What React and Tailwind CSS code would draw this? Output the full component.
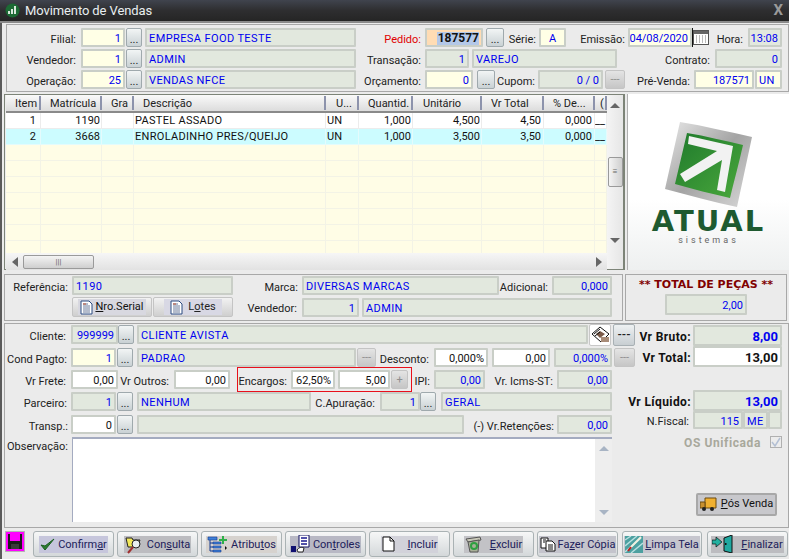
import React from "react";

const fieldBg = {
  gray: "bg-[#e2e8de] text-[#0000f0]",
  yellow: "bg-[#ffffe6] text-[#0000f0]",
  white: "bg-white text-[#111]",
  orange: "bg-[#ffdcb4] text-[#111]",
};

function Lbl({ className = "", children }) {
  return (
    <div className={"shrink-0 text-right whitespace-nowrap text-[#222] leading-[13px] pt-[3px] " + className}>{children}</div>
  );
}

function Box({ className = "", v = "gray", left, children }) {
  return (
    <div
      className={
        "shrink-0 h-[19px] border-2 border-[#c9cec7] rounded-[1px] flex items-center px-[2px] pt-[2px] leading-[13px] whitespace-nowrap overflow-hidden " +
        (left ? "justify-start tracking-[0.4px] " : "justify-end ") +
        fieldBg[v] +
        " " +
        className
      }
    >
      {children}
    </div>
  );
}

function Dots({ className = "" }) {
  return (
    <div
      className={
        "shrink-0 h-[19px] border border-[#9fa9ad] rounded-[2px] bg-gradient-to-b from-[#f2f5f5] to-[#c9d1d4] flex items-center justify-center text-[#222] leading-none pt-[3px] " +
        className
      }
    >
      ...
    </div>
  );
}

function Off({ className = "", plus }) {
  return (
    <div
      className={
        "shrink-0 h-[19px] border border-[#c4c4c4] rounded-[2px] bg-gradient-to-b from-[#e4e4e4] to-[#c6c6c6] flex items-center justify-center text-[#8f8f8f] text-[11px] leading-none " +
        className
      }
    >
      {plus ? "+" : "---"}
    </div>
  );
}

function U({ children }) {
  return <span className="underline">{children}</span>;
}

function Page() {
  return (
    <svg width="13" height="15" viewBox="0 0 13 15" className="shrink-0">
      <path d="M1 1h8l3 3v10H1z" fill="#fff" stroke="#2a4a80" />
      <path d="M3 4h5M3 6h7M3 8h7M3 10h7M3 12h7" stroke="#6a7a9a" />
      <path d="M3 4h3" stroke="#c05030" />
    </svg>
  );
}

const tools = [
  {
    w: "w-[81px]",
    bg: "bg-[#c6c6dc]",
    gap: "gap-[3px]",
    text: <>Confirm<U>a</U>r</>,
    icon: (
      <svg width="15" height="15" viewBox="0 0 15 15">
        <path d="M1 8l4 5L14 2 5 9z" fill="#2e7d32" stroke="#1b5e20" />
      </svg>
    ),
  },
  {
    w: "w-[81px] ml-[3px]",
    bg: "bg-[#bcbcc0]",
    gap: "gap-[3px]",
    text: <>Con<U>s</U>ulta</>,
    icon: (
      <svg width="19" height="19" viewBox="0 0 19 19">
        <path d="M1 3h6l1 2h7l-3 7H3z" fill="#f2e85a" stroke="#222" />
        <circle cx="11" cy="9" r="4" fill="#e8eef0" stroke="#222" />
        <path d="M8 12l-5 6" stroke="#a03030" strokeWidth="2" />
      </svg>
    ),
  },
  {
    w: "w-[81px] ml-[3px]",
    bg: "bg-[#d6d2ce]",
    gap: "gap-[3px]",
    text: <>Atribu<U>t</U>os</>,
    icon: (
      <svg width="21" height="17" viewBox="0 0 21 17">
        <path d="M3 3v12M3 7h3M3 11h3M3 15h3" stroke="#123a90" fill="none" />
        <path d="M1 1h9v3H1zM6 6h8v2H6zM6 10h8v2H6zM6 14h8v2H6z" fill="#3f80d8" stroke="#123a90" strokeWidth="0.6" />
        <path d="M12 3h3V0h2v3h3v2h-3v3h-2V5h-3z" fill="#2fb04a" />
        <path d="M18 10l2 2-2 2z" fill="#111" />
      </svg>
    ),
  },
  {
    w: "w-[81px] ml-[3px]",
    bg: "bg-[#b8b8c4]",
    gap: "gap-[3px]",
    text: <>Con<U>t</U>roles</>,
    icon: (
      <svg width="19" height="18" viewBox="0 0 19 18">
        <path d="M8 0h10v12H8z" fill="#fff" stroke="#101060" />
        <path d="M10 3h6M10 6h6M10 9h6" stroke="#1a1a90" strokeWidth="1.4" />
        <rect x="0" y="11" width="5" height="6" fill="#101070" />
        <path d="M6 15c2-3 5-3 7-2l-1 4H7z" fill="#fff" stroke="#222" />
      </svg>
    ),
  },
  {
    w: "w-[81px] ml-[3px]",
    bg: "bg-[#d2d2da]",
    gap: "gap-[13px]",
    text: <><U>I</U>ncluir</>,
    icon: (
      <svg width="13" height="16" viewBox="0 0 13 16">
        <path d="M1 1h7l4 4v10H1z" fill="#fff" stroke="#111" />
        <path d="M8 1v4h4" fill="none" stroke="#111" />
      </svg>
    ),
  },
  {
    w: "w-[81px] ml-[3px]",
    bg: "bg-[#c2c2c6]",
    gap: "gap-[8px]",
    text: <><U>E</U>xcluir</>,
    icon: (
      <svg width="17" height="17" viewBox="0 0 17 17">
        <path d="M1 3l14-2 1 3-13 2z" fill="#c8c8b8" stroke="#555" />
        <path d="M3 6l11-2-1 12H5z" fill="#a8b098" stroke="#555" />
        <circle cx="9" cy="10" r="3" fill="none" stroke="#2ea040" strokeWidth="2" />
      </svg>
    ),
  },
  {
    w: "w-[81px] ml-[3px]",
    bg: "bg-[#c4c4cc]",
    gap: "gap-[2px]",
    text: <>Fa<U>z</U>er Cópia</>,
    icon: (
      <svg width="16" height="15" viewBox="0 0 16 15">
        <path d="M1 1h7v10H1z" fill="#fff" stroke="#111" />
        <path d="M6 4h6l3 3v7H6z" fill="#fff" stroke="#111" />
        <path d="M8 8h5M8 10h5M8 12h5M3 3h3M3 5h2" stroke="#111" />
      </svg>
    ),
  },
  {
    w: "w-[80px] ml-[4px]",
    bg: "bg-[#c6c6ce]",
    gap: "gap-[2px]",
    text: <><U>L</U>impa Tela</>,
    icon: (
      <svg width="18" height="17" viewBox="0 0 18 17">
        <rect width="18" height="17" fill="#4ca0a0" />
        <path d="M0 4l6-4M0 10L12 0M0 16L16 2M6 17L18 7" stroke="#b8e0e0" strokeWidth="1.4" />
        <path d="M16 1L5 12" stroke="#f0f0e0" strokeWidth="2" />
        <path d="M6 11l-3 4" stroke="#c02020" strokeWidth="2" />
      </svg>
    ),
  },
  {
    w: "w-[81px] ml-[5px]",
    bg: "bg-[#bcbcc0]",
    gap: "gap-[8px]",
    text: <><U>F</U>inalizar</>,
    icon: (
      <svg width="21" height="18" viewBox="0 0 21 18">
        <path d="M0 5h4V2l6 5-6 5V9H0z" fill="#23b0a0" stroke="#111" strokeWidth="0.7" />
        <path d="M12 3l8-3v18l-8-2z" fill="#1fa8a0" stroke="#111" />
        <rect x="13" y="8" width="1.5" height="2" fill="#111" />
      </svg>
    ),
  },
];

const cols = [
  { w: "w-[35px]", name: "Item", r: "pr-[4px] text-right", h: "pl-[9px]" },
  { w: "w-[61px]", name: "Matrícula", r: "text-right pr-[1px]", h: "pl-[9px]" },
  { w: "w-[32px]", name: "Gra", r: "", h: "pl-[9px]" },
  { w: "w-[192px]", name: "Descrição", r: "pl-[1px] tracking-[0.3px]", h: "pl-[9px]" },
  { w: "w-[33px]", name: "U...", r: "pl-[1px]", h: "pl-[10px]" },
  { w: "w-[54px]", name: "Quantid.", r: "text-right pr-[1px]", h: "pl-[9px]" },
  { w: "w-[69px]", name: "Unitário", r: "text-right pr-[1px]", h: "pl-[10px]" },
  { w: "w-[62px]", name: "Vr Total", r: "text-right pr-[2px]", h: "pl-[9px]" },
  { w: "w-[51px]", name: "% De...", r: "text-right pr-[2px]", h: "pl-[9px]" },
  { w: "w-[12px]", name: "(", r: "", h: "pl-[5px]" },
];

const rows = [
  { bg: "bg-white", line: "border-[#ececec]", cells: ["1", "1190", "", "PASTEL ASSADO", "UN", "1,000", "4,500", "4,50", "0,000", "__"] },
  { bg: "bg-[#ccfcff]", line: "border-[#e4fbfc]", cells: ["2", "3668", "", "ENROLADINHO PRES/QUEIJO", "UN", "1,000", "3,500", "3,50", "0,000", "__"] },
];

const blanks = [0, 1, 2, 3, 4, 5, 6];

function Table() {
  return (
    <div className="w-[621px] h-[176px] shrink-0 border border-[#7d8478] border-r-2 flex bg-[#ececec]">
      <div className="w-[601px] ml-[1px] flex flex-col shrink-0">
        <div className="flex h-[18px] shrink-0 bg-gradient-to-b from-[#fafafa] to-[#dcdcdc] border-b-2 border-[#8a8a8a]">
          {cols.map((c) => (
            <div key={c.name} className={"shrink-0 flex items-center overflow-hidden whitespace-nowrap border-r-2 border-[#8d93ac] my-[1px] pt-[2px] leading-[12px] text-[#222] " + c.w + " " + c.h}>
              {c.name}
            </div>
          ))}
        </div>
        {rows.map((r) => (
          <div key={r.cells[0]} className={"flex h-[16px] shrink-0 text-[#111] " + r.bg}>
            {cols.map((c, i) => (
              <div key={c.name} className={"shrink-0 overflow-hidden whitespace-nowrap leading-[16px] border-r border-b " + r.line + " " + c.w + " " + c.r}>
                {r.cells[i]}
              </div>
            ))}
          </div>
        ))}
        <div className="h-[108px] shrink-0 overflow-hidden">
          {blanks.map((b) => (
            <div key={b} className="flex h-[16px] bg-[#fffde6]">
              {cols.map((c) => (
                <div key={c.name} className={"shrink-0 border-r border-b border-[#f3f3e6] " + c.w}></div>
              ))}
            </div>
          ))}
        </div>
        <div className="h-[17px] shrink-0 flex items-center bg-gradient-to-b from-[#f6f6f6] to-[#e2e2e2]">
          <div className="ml-[6px] border-y-[5px] border-r-[6px] border-y-transparent border-r-[#666]"></div>
          <div className="ml-[5px] w-[71px] h-[14px] border border-[#9a9a9a] rounded-[2px] bg-gradient-to-b from-[#f4f4f4] to-[#cfcfcf] flex items-center justify-center text-[8px] leading-none text-[#666]">
            |||
          </div>
          <div className="ml-auto mr-[5px] border-y-[5px] border-l-[6px] border-y-transparent border-l-[#666]"></div>
        </div>
      </div>
      <div className="flex-1 flex flex-col items-center bg-gradient-to-r from-[#f4f4f4] to-[#e6e6e6]">
        <div className="mt-[8px] border-x-[5px] border-b-[5px] border-x-transparent border-b-[#666]"></div>
        <div className="mt-[49px] w-[15px] h-[30px] border border-[#9a9a9a] rounded-[2px] bg-gradient-to-r from-[#f4f4f4] to-[#cfcfcf] flex items-center justify-center text-[8px] leading-none text-[#666]">
          ≡
        </div>
        <div className="mt-[51px] border-x-[5px] border-t-[5px] border-x-transparent border-t-[#666]"></div>
      </div>
    </div>
  );
}

function Logo() {
  return (
    <div className="w-[162px] h-[176px] shrink-0 ml-[2px] bg-gradient-to-b from-white from-60% to-[#eef0f0] flex flex-col items-center border-l border-[#b0b0b0]">
      <svg width="88" height="86" viewBox="0 0 88 86" className="mt-[28px] shrink-0">
        <defs>
          <linearGradient id="silver" x1="0" y1="0" x2="1" y2="1">
            <stop offset="0" stopColor="#e8e8e8" />
            <stop offset="0.5" stopColor="#a4a4a4" />
            <stop offset="1" stopColor="#d8d8d8" />
          </linearGradient>
          <linearGradient id="leaf" x1="0" y1="0" x2="1" y2="1">
            <stop offset="0" stopColor="#1f7a2c" />
            <stop offset="1" stopColor="#4aa83c" />
          </linearGradient>
        </defs>
        <path d="M15 0C40 4 64 10 87 15C82 38 77 62 72 85C48 80 24 73 0 67C5 45 10 22 15 0Z" fill="url(#silver)" />
        <path d="M22 11C41 14 60 19 78 23C74 41 69 59 65 76C47 72 28 67 10 62C14 45 18 28 22 11Z" fill="url(#leaf)" />
        <path d="M24 14L68 24L60 70L52 68L57 38L20 60L15 52L52 29L23 22Z" fill="#f2f2f2" />
      </svg>
      <div className="font-['DejaVu_Sans',sans-serif] font-bold text-[29px] leading-[29px] tracking-[2px] text-[#1e5a30] mt-[-1px]">
        ATUAL
      </div>
      <div className="text-[9px] leading-[8px] tracking-[3px] text-[#666]">sistemas</div>
    </div>
  );
}

export default function App() {
  return (
    <div className="w-[789px] h-[559px] overflow-hidden flex flex-col bg-[#ebebeb] font-['Roboto',sans-serif] text-[11px]">
      <div className="h-[23px] shrink-0 bg-gradient-to-b from-[#40444e] via-[#2e2e30] to-[#252525] border-b-2 border-[#8a8a8a] flex items-center pl-[5px]">
        <svg width="15" height="15" viewBox="0 0 15 15">
          <circle cx="7.5" cy="7.5" r="7" fill="#1c6a34" />
          <path d="M3 11V8h2v3zM6 11V6h2v5zM9 11V3h2v8z" fill="#d9e8dc" />
        </svg>
        <span className="ml-[5px] text-[#e8eef0] text-[13px] tracking-[-0.1px]">Movimento de Vendas</span>
        <span className="ml-auto mr-[6px] text-[#9a9a9a] font-bold text-[15px] leading-none">X</span>
      </div>

      <div className="flex-1 flex flex-col border-l-2 border-[#5a5a5a] min-h-0">
        {/* cabecalho */}
        <div className="ml-[4px] mt-[1px] h-[68px] shrink-0 border border-[#a8a8a8] flex flex-col gap-[2px] pt-[3px]">
          <div className="flex items-center">
            <Lbl className="w-[69px]">Filial:</Lbl>
            <Box v="yellow" className="w-[44px] ml-[5px]">1</Box>
            <Dots className="w-[16px] ml-[1px]" />
            <Box left className="w-[211px] ml-[3px]">EMPRESA FOOD TESTE</Box>
            <Lbl className="w-[65px] !text-[#e00000]">Pedido:</Lbl>
            <Box v="orange" className="w-[58px] ml-[4px] font-bold text-[12px]">
              <span className="bg-[#b4c8e8] text-[#111] pl-[1px]">187577</span>
            </Box>
            <Dots className="w-[18px] ml-[3px]" />
            <Lbl className="w-[32px]">Série:</Lbl>
            <Box v="yellow" className="w-[27px] ml-[3px] !justify-center">A</Box>
            <Lbl className="w-[59px]">Emissão:</Lbl>
            <Box v="yellow" className="w-[64px] ml-[3px]">04/08/2020</Box>
            <div className="w-[17px] h-[19px] shrink-0 border-l border-[#111] flex items-center justify-center">
              <svg width="16" height="15" viewBox="0 0 16 15">
                <rect x="0.5" y="0.5" width="15" height="14" fill="#fff" stroke="#555" />
                <rect x="1" y="1" width="14" height="3" fill="#666" />
                <path d="M3 6h1M6 6h1M9 6h1M12 6h1M3 8h1M6 8h1M9 8h1M12 8h1M3 10h1M6 10h1M9 10h1M12 10h1M3 12h1M6 12h1M9 12h1M12 12h1" stroke="#777" />
              </svg>
            </div>
            <Lbl className="w-[34px]">Hora:</Lbl>
            <Box className="w-[34px] ml-[5px]">13:08</Box>
          </div>
          <div className="flex items-center">
            <Lbl className="w-[69px]">Vendedor:</Lbl>
            <Box v="yellow" className="w-[44px] ml-[5px]">1</Box>
            <Dots className="w-[16px] ml-[1px]" />
            <Box left className="w-[211px] ml-[3px]">ADMIN</Box>
            <Lbl className="w-[65px]">Transação:</Lbl>
            <Box className="w-[44px] ml-[4px]">1</Box>
            <Box left className="w-[145px] ml-[3px]">VAREJO</Box>
            <Lbl className="w-[93px]">Contrato:</Lbl>
            <Box className="w-[67px] ml-[5px]">0</Box>
          </div>
          <div className="flex items-center">
            <Lbl className="w-[69px]">Operação:</Lbl>
            <Box v="yellow" className="w-[44px] ml-[5px]">25</Box>
            <Dots className="w-[16px] ml-[1px]" />
            <Box left className="w-[211px] ml-[3px]">VENDAS NFCE</Box>
            <Lbl className="w-[65px]">Orçamento:</Lbl>
            <Box v="yellow" className="w-[48px] ml-[4px]">0</Box>
            <Dots className="w-[18px] ml-[4px]" />
            <Lbl className="w-[40px]">Cupom:</Lbl>
            <Box className="w-[65px] ml-[3px]">0 / 0</Box>
            <Off className="w-[20px] ml-[2px]" />
            <Lbl className="w-[65px]">Pré-Venda:</Lbl>
            <Box v="yellow" className="w-[60px] ml-[4px]">187571</Box>
            <Box v="yellow" left className="w-[27px] ml-[1px]">UN</Box>
          </div>
        </div>

        {/* itens */}
        <div className="flex ml-[2px] mt-[2px] shrink-0">
          <Table />
          <Logo />
        </div>

        {/* referencia + total */}
        <div className="flex ml-[2px] mt-[4px] shrink-0">
          <div className="w-[619px] h-[47px] shrink-0 border border-[#a8a8a8] flex flex-col gap-[2px] pt-[1px]">
            <div className="flex items-center">
              <Lbl className="w-[63px]">Referência:</Lbl>
              <Box left className="w-[161px] ml-[4px]">1190</Box>
              <Lbl className="w-[65px]">Marca:</Lbl>
              <Box left className="w-[197px] ml-[4px]">DIVERSAS MARCAS</Box>
              <Lbl className="w-[49px]">Adicional:</Lbl>
              <Box className="w-[60px] ml-[4px]">0,000</Box>
            </div>
            <div className="flex items-center">
              <div className="w-[80px] h-[20px] ml-[67px] shrink-0 border border-[#c4c4c4] rounded-[2px] bg-gradient-to-b from-[#f2f2f2] to-[#cfcfcf] flex items-center justify-center">
                <div className="flex items-center gap-[2px] bg-[#d8d8e0] px-[2px] h-[16px] text-[#111]">
                  <Page />
                  <span><U>N</U>ro.Serial</span>
                </div>
              </div>
              <div className="w-[80px] h-[20px] ml-[1px] shrink-0 border border-[#c4c4c4] rounded-[2px] bg-gradient-to-b from-[#f2f2f2] to-[#cfcfcf] flex items-center justify-center">
                <div className="flex items-center gap-[5px] bg-[#d8d8e4] px-[6px] h-[16px] text-[#222]">
                  <Page />
                  <span>L<U>o</U>tes</span>
                </div>
              </div>
              <Lbl className="w-[64px]">Vendedor:</Lbl>
              <Box className="w-[57px] ml-[5px]">1</Box>
              <Box left className="w-[250px] ml-[3px]">ADMIN</Box>
            </div>
          </div>
          <div className="w-[162px] h-[47px] ml-[2px] shrink-0 border border-[#a8a8a8] flex flex-col items-center">
            <div className="h-[17px] mt-[2px] font-bold text-[#800000] text-[11px] font-['DejaVu_Sans',sans-serif] whitespace-nowrap">
              ** TOTAL DE PEÇAS **
            </div>
            <Box className="w-[82px] !h-[21px]">2,00</Box>
          </div>
        </div>

        {/* totais e pagamento */}
        <div className="ml-[2px] mt-[2px] w-[785px] h-[205px] shrink-0 border border-[#a8a8a8] flex">
          <div className="w-[631px] shrink-0 flex flex-col pt-[1px]">
            <div className="flex items-center h-[19px]">
              <Lbl className="w-[61px]">Cliente:</Lbl>
              <Box className="w-[47px] ml-[5px]">999999</Box>
              <Dots className="w-[16px]" />
              <Box left className="w-[451px] ml-[3px]">CLIENTE AVISTA</Box>
              <div className="w-[22px] h-[22px] ml-[1px] shrink-0 rounded-[2px] border border-[#c8c8c8] bg-white flex items-center justify-center">
                <svg width="19" height="17" viewBox="0 0 19 17">
                  <path d="M1 8l8-7 9 7-8 8z" fill="#fff" stroke="#111" />
                  <path d="M5 8l4-3 5 3-5 4z" fill="#7a5a48" />
                  <path d="M10 11h8v5h-8z" fill="#a88c78" />
                  <path d="M3 8l6-5M4 10l5-4" stroke="#111" />
                </svg>
              </div>
              <div className="w-[22px] h-[22px] ml-[2px] shrink-0 rounded-[2px] border border-[#a8b0b4] bg-gradient-to-b from-[#eef1f2] to-[#c8ced2] flex items-center justify-center font-bold text-[#222] leading-none">
                ---
              </div>
            </div>
            <div className="flex items-center mt-[4px]">
              <Lbl className="w-[62px]">Cond Pagto:</Lbl>
              <Box v="yellow" className="w-[45px] ml-[4px]">1</Box>
              <Dots className="w-[16px] ml-[1px]" />
              <Box left className="w-[219px] ml-[4px]">PADRAO</Box>
              <Off className="w-[19px] ml-[1px]" />
              <Lbl className="w-[53px]">Desconto:</Lbl>
              <Box v="white" className="w-[54px] ml-[5px]">0,000%</Box>
              <Box v="white" className="w-[58px] ml-[4px]">0,00</Box>
              <Box className="w-[58px] ml-[4px]">0,000%</Box>
              <Off className="w-[21px] ml-[2px]" />
            </div>
            <div className="flex items-center h-[19px] mt-[3px]">
              <Lbl className="w-[61px]">Vr Frete:</Lbl>
              <Box v="white" className="w-[47px] ml-[5px]">0,00</Box>
              <Lbl className="w-[51px]">Vr Outros:</Lbl>
              <Box v="white" className="w-[56px] ml-[5px]">0,00</Box>
              <div className="w-[175px] h-[25px] ml-[7px] shrink-0 border border-[#e8101c] flex items-center">
                <Lbl className="w-[49px]">Encargos:</Lbl>
                <Box v="white" className="w-[44px] ml-[4px]">62,50%</Box>
                <Box v="white" className="w-[52px] ml-[3px]">5,00</Box>
                <Off plus className="w-[17px] ml-[1px]" />
              </div>
              <Lbl className="w-[18px]">IPI:</Lbl>
              <Box className="w-[51px] ml-[4px]">0,00</Box>
              <Lbl className="w-[68px]">Vr. Icms-ST:</Lbl>
              <Box className="w-[55px] ml-[4px]">0,00</Box>
            </div>
            <div className="flex items-center mt-[3px]">
              <Lbl className="w-[62px]">Parceiro:</Lbl>
              <Box className="w-[45px] ml-[4px]">1</Box>
              <Dots className="w-[16px] ml-[1px]" />
              <Box left className="w-[174px] ml-[4px]">NENHUM</Box>
              <Lbl className="w-[64px]">C.Apuração:</Lbl>
              <Box className="w-[40px] ml-[5px]">1</Box>
              <Dots className="w-[16px]" />
              <Box left className="w-[171px] ml-[5px]">GERAL</Box>
            </div>
            <div className="flex items-center mt-[4px]">
              <Lbl className="w-[63px]">Transp.:</Lbl>
              <Box v="white" className="w-[45px] ml-[3px]">0</Box>
              <Dots className="w-[16px] ml-[1px]" />
              <Box className="w-[327px] ml-[4px]"></Box>
              <Lbl className="w-[90px]">(-) Vr.Retenções:</Lbl>
              <Box className="w-[55px] ml-[3px]">0,00</Box>
            </div>
            <div className="flex items-start mt-[3px]">
              <Lbl className="w-[63px]">Observação:</Lbl>
              <div className="w-[540px] h-[85px] ml-[4px] shrink-0 bg-white border-t-2 border-l border-[#a4abc0] flex justify-end">
                <div className="w-[17px] bg-[#eeeeee] flex flex-col items-center justify-between py-[7px]">
                  <div className="border-x-[5px] border-b-[5px] border-x-transparent border-b-[#a8b4c4]"></div>
                  <div className="border-x-[5px] border-t-[5px] border-x-transparent border-t-[#a8b4c4]"></div>
                </div>
              </div>
            </div>
          </div>

          <div className="flex-1 flex flex-col pt-[1px]">
            <div className="flex items-center">
              <Lbl className="w-[55px] font-bold text-[12px] tracking-[0.4px] !text-[#111]">Vr Bruto:</Lbl>
              <Box className="w-[89px] !h-[21px] ml-[2px] font-bold text-[13px]">8,00</Box>
            </div>
            <div className="flex items-center">
              <Lbl className="w-[55px] font-bold text-[12px] tracking-[0.4px] !text-[#111]">Vr Total:</Lbl>
              <Box v="white" className="w-[89px] !h-[21px] ml-[2px] font-bold text-[13px]">13,00</Box>
            </div>
            <div className="flex items-center mt-[23px]">
              <Lbl className="w-[64px] ml-[-9px] font-bold text-[12px] tracking-[0.4px] !text-[#111]">Vr Líquido:</Lbl>
              <Box className="w-[89px] !h-[21px] ml-[2px] font-bold text-[13px]">13,00</Box>
            </div>
            <div className="flex items-center">
              <Lbl className="w-[53px]">N.Fiscal:</Lbl>
              <Box className="w-[50px] !h-[18px] ml-[4px]">115</Box>
              <Box left className="w-[25px] !h-[18px]">ME</Box>
              <Box className="w-[14px] !h-[18px]"></Box>
            </div>
            <div className="flex items-center mt-[5px] h-[16px]">
              <Lbl className="w-[125px] font-bold text-[12px] tracking-[0.6px] !text-[#a8a89c]">OS Unificada</Lbl>
              <div className="w-[12px] h-[12px] ml-[9px] shrink-0 border border-[#b0b0b0] bg-[#ececec] flex items-center justify-center">
                <svg width="10" height="10" viewBox="0 0 10 10">
                  <path d="M1 5l3 4 5-8" fill="none" stroke="#b4c0d4" strokeWidth="1.5" />
                </svg>
              </div>
            </div>
            <div className="w-[81px] h-[23px] ml-[60px] mt-[43px] shrink-0 border-2 border-[#a8a8a8] rounded-[2px] bg-[#c8c8cc] flex items-center justify-center gap-[4px] text-[#111] whitespace-nowrap">
              <svg width="17" height="15" viewBox="0 0 17 15" className="shrink-0">
                <path d="M5 1h11v10H5z" fill="#f0b030" stroke="#6a4a10" />
                <path d="M0 5h5v6H0z" fill="#c89030" stroke="#6a4a10" />
                <circle cx="4" cy="12" r="2" fill="#222" />
                <circle cx="12" cy="12" r="2" fill="#222" />
              </svg>
              <span><U>P</U>ós Venda</span>
            </div>
          </div>
        </div>

        {/* barra de botoes */}
        <div className="flex ml-[3px] mt-[3px] shrink-0">
          <div className="w-[20px] h-[21px] shrink-0 border border-[#b4b4b4] bg-[#ff00ff] flex items-center justify-center">
            <svg width="14" height="15" viewBox="0 0 14 15">
              <path d="M0 0h14v15H0z" fill="#1c1c1c" />
              <path d="M2 0h10v7H2z" fill="#ff00ff" />
              <path d="M3 10h8v5H3z" fill="#3a3a3a" />
            </svg>
          </div>
          <div className="flex ml-[8px]">
            {tools.map((t, i) => (
              <div
                key={i}
                className={"h-[26px] shrink-0 border border-[#aab2b4] rounded-[3px] bg-gradient-to-b from-[#f6f7f7] to-[#d4d8da] flex items-center justify-center " + t.w}
              >
                <div className={"flex items-center h-[17px] px-[1px] text-[#20205a] whitespace-nowrap " + t.gap + " " + t.bg}>
                  {t.icon}
                  <span className="pt-[2px] leading-[14px]">{t.text}</span>
                </div>
              </div>
            ))}
          </div>
        </div>
      </div>
    </div>
  );
}
